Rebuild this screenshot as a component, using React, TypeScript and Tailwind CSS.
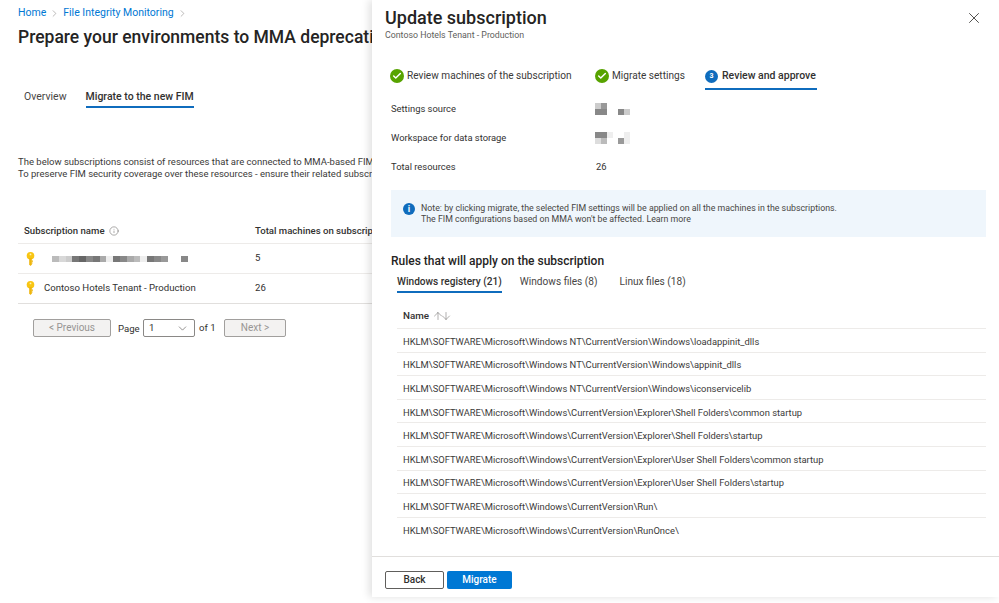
import { Check, ChevronDown, ChevronRight, Info, X, ArrowUp, ArrowDown } from "lucide-react"

const FONT = "font-['Roboto','Noto_Sans',sans-serif]"

const rules = [
  "HKLM\\SOFTWARE\\Microsoft\\Windows NT\\CurrentVersion\\Windows\\loadappinit_dlls",
  "HKLM\\SOFTWARE\\Microsoft\\Windows NT\\CurrentVersion\\Windows\\appinit_dlls",
  "HKLM\\SOFTWARE\\Microsoft\\Windows NT\\CurrentVersion\\Windows\\iconservicelib",
  "HKLM\\SOFTWARE\\Microsoft\\Windows\\CurrentVersion\\Explorer\\Shell Folders\\common startup",
  "HKLM\\SOFTWARE\\Microsoft\\Windows\\CurrentVersion\\Explorer\\Shell Folders\\startup",
  "HKLM\\SOFTWARE\\Microsoft\\Windows\\CurrentVersion\\Explorer\\User Shell Folders\\common startup",
  "HKLM\\SOFTWARE\\Microsoft\\Windows\\CurrentVersion\\Explorer\\User Shell Folders\\startup",
  "HKLM\\SOFTWARE\\Microsoft\\Windows\\CurrentVersion\\Run\\",
  "HKLM\\SOFTWARE\\Microsoft\\Windows\\CurrentVersion\\RunOnce\\",
]

function KeyIcon() {
  return (
    <svg width="9" height="14" viewBox="0 0 9 14" className="shrink-0">
      <circle cx="4.5" cy="3.8" r="3.8" fill="#f8c513" />
      <circle cx="4.5" cy="2.4" r="0.9" fill="#fff3b0" />
      <path d="M3.2 6h2.6v6.4L4.5 14l-1.3-1.6z" fill="#eeb50c" />
      <path d="M5.5 8.6h1.5v1.1H5.5zM5.5 10.4h1.1v1H5.5z" fill="#eeb50c" />
    </svg>
  )
}

function Pixels({ cells, size = 6 }: { cells: string[]; size?: number }) {
  // mosaic that hides redacted values
  return (
    <div className="flex flex-col">
      {[0, 1].map(row => (
        <div key={row} className="flex">
          {cells[row].split("").map((c, i) => (
            <div
              key={i}
              style={{ width: size, height: size, background: c === "." ? "transparent" : `#${c}${c}${c}${c}${c}${c}` }}
            />
          ))}
        </div>
      ))}
    </div>
  )
}

function DoneStep({ label }: { label: string }) {
  return (
    <div className="flex items-center gap-[3px] h-[25px] pb-[3px] text-[10.1px]">
      <span className="w-[14px] h-[14px] rounded-full bg-[#57a300] flex items-center justify-center">
        <Check className="w-[10px] h-[10px] text-white" strokeWidth={3.5} />
      </span>
      <span className="text-[#3b3a39]">{label}</span>
    </div>
  )
}

export default function App() {
  return (
    <div className={`${FONT} flex w-[999px] h-[603px] overflow-hidden bg-white text-[10.5px] text-[#323130]`}>
      <div className="w-[372px] shrink-0 overflow-hidden pl-[18px]">
        <div className="flex items-center h-[12px] mt-[7px] text-[10.5px] text-[#0078d4]">
          <span>Home</span>
          <ChevronRight className="w-[11px] h-[11px] mx-[3px] text-[#8a8886]" strokeWidth={1.25} />
          <span>File Integrity Monitoring</span>
          <ChevronRight className="w-[11px] h-[11px] ml-[3px] text-[#8a8886]" strokeWidth={1.25} />
        </div>
        <h1 className="mt-[6px] text-[17.5px] leading-[24px] font-medium text-[#252423] whitespace-nowrap">
          Prepare your environments to MMA deprecation
        </h1>
        <div className="flex mt-[39px] ml-[6px] gap-[19px] h-[20px]">
          <span className="pt-[1px] text-[#484644]">Overview</span>
          <span className="pt-[1px] h-[20px] border-b-2 border-[#0f6cbd] font-medium">Migrate to the new FIM</span>
        </div>
        <div className="mt-[48px] leading-[12px] whitespace-nowrap text-[9.5px] text-[#3b3a39]">
          <p>The below subscriptions consist of resources that are connected to MMA-based FIM and require migration.</p>
          <p>To preserve FIM security coverage over these resources - ensure their related subscriptions are migrated.</p>
        </div>
        <div className="mt-[40px] text-[9.6px]">
          <div className="flex items-center h-[24px] border-b border-[#edebe9] pl-[6px] font-medium whitespace-nowrap">
            <span className="w-[231px] shrink-0 flex items-center gap-[4px]">
              Subscription name
              <Info className="w-[10px] h-[10px] text-[#605e5c]" strokeWidth={1.25} />
            </span>
            <span>Total machines on subscription</span>
          </div>
          <div className="flex items-center h-[30px] border-b border-[#edebe9] pl-[8px]">
            <span className="w-[229px] shrink-0 flex items-center">
              <KeyIcon />
              <span className="ml-[17px]">
                <div className="flex h-[6px]">
                  {["#bbb", "#d8d8d8", "#ccc", "#777", "#666", "#888", "#777", "#aaa", "#eee", "#777", "#888", "#aaa", "#bbb", "#eee", "#777", "#888", "#999", "#fff", "#fff", "#888"].map((c, i) => (
                    <div key={i} className="w-[6.8px]" style={{ background: c }} />
                  ))}
                </div>
              </span>
            </span>
            <span>5</span>
          </div>
          <div className="flex items-center h-[30px] border-b border-[#e1dfdd] pl-[8px]">
            <span className="w-[229px] shrink-0 flex items-center gap-[9px]">
              <KeyIcon />
              Contoso Hotels Tenant - Production
            </span>
            <span>26</span>
          </div>
        </div>
        <div className="flex items-center mt-[15px] ml-[15px] text-[9.6px]">
          <button className="w-[78px] h-[18px] bg-[#f3f2f1] border border-[#a19f9d] rounded-[2px] text-[#979593] text-[10px] leading-none">&lt; Previous</button>
          <span className="ml-[7px] w-[25px] pt-[2px]">Page</span>
          <span className="w-[52px] h-[18px] border border-[#8a8886] rounded-[2px] flex items-center justify-between pl-[5px] pr-[5px]">
            1
            <ChevronDown className="w-[13px] h-[13px] text-[#605e5c]" strokeWidth={1.25} />
          </span>
          <span className="ml-[4px] w-[25px] pt-[1px]">of 1</span>
          <button className="w-[62px] h-[18px] bg-[#f3f2f1] border border-[#a19f9d] rounded-[2px] text-[#979593] text-[10px] leading-none">Next &gt;</button>
        </div>
      </div>

      <div className="relative flex-1 h-[597px] flex flex-col pl-[13px] pr-[13px] shadow-[-3px_0_8px_rgba(0,0,0,0.12)]">
        <X className="absolute right-[16px] top-[9px] w-[18px] h-[18px] text-[#484644]" strokeWidth={1.25} />
        <h2 className="mt-[6px] text-[18px] leading-[24px] font-medium text-[#252423]">Update subscription</h2>
        <p className="text-[8.8px] leading-[11px] text-[#605e5c]">Contoso Hotels Tenant - Production</p>

        <div className="flex items-start mt-[24px] ml-[5px] h-[25px] whitespace-nowrap">
          <div className="w-[205px]"><DoneStep label="Review machines of the subscription" /></div>
          <div className="w-[110px]"><DoneStep label="Migrate settings" /></div>
          <div className="flex items-center gap-[4px] h-[25px] pb-[1px] border-b-2 border-[#0f6cbd] pr-[1px]">
            <span className="w-[13px] h-[13px] rounded-full bg-[#0f6cbd] text-white text-[7px] font-bold flex items-center justify-center">3</span>
            <span className="font-medium">Review and approve</span>
          </div>
        </div>

        <div className="ml-[6px] mt-[5px] whitespace-nowrap text-[9.4px]">
          <div className="flex items-center h-[29px]">
            <span className="w-[205px]">Settings source</span>
            <div className="flex items-end gap-[5px] -ml-[1px] -mt-[1px]">
              <Pixels cells={["c9.", "88."]} />
              <Pixels cells={[".f", "8c"]} />
            </div>
          </div>
          <div className="flex items-center h-[29px]">
            <span className="w-[205px]">Workspace for data storage</span>
            <div className="flex items-end gap-[5px] -ml-[1px] -mt-[1px]">
              <Pixels cells={["88e", "dbf"]} />
              <Pixels cells={[".e", "9e"]} />
            </div>
          </div>
          <div className="flex items-center h-[29px]">
            <span className="w-[205px]">Total resources</span>
            <span>26</span>
          </div>
        </div>

        <div className="ml-[6px] mt-[8px] h-[47px] bg-[#eff6fc] flex items-start pt-[13px] pl-[12px] text-[8.8px] leading-[11px] text-[#484644]">
          <span className="w-[12px] h-[12px] rounded-full bg-[#0f6cbd] text-white text-[9px] font-bold flex items-center justify-center shrink-0 mr-[6px]">i</span>
          <div className="whitespace-nowrap">
            <p>Note: by clicking migrate, the selected FIM settings will be applied on all the machines in the subscriptions.</p>
            <p>The FIM configurations based on MMA won't be affected. Learn more</p>
          </div>
        </div>

        <h3 className="ml-[6px] mt-[16px] text-[12px] leading-[16px] font-medium text-[#252423]">Rules that will apply on the subscription</h3>
        <div className="flex ml-[12px] mt-[5px] gap-[18px] h-[19px] whitespace-nowrap text-[10.15px]">
          <span className="h-[19px] border-b-2 border-[#0f6cbd] font-medium">Windows registery (21)</span>
          <span className="text-[#484644]">Windows files (8)</span>
          <span className="ml-[4px] text-[#484644]">Linux files (18)</span>
        </div>

        <div className="ml-[12px] mt-[11px] text-[9.4px]">
          <div className="flex items-center h-[25px] pl-[6px] border-b border-[#edebe9] font-medium text-[9.8px]">
            Name
            <span className="flex ml-[3px] text-[#605e5c]">
              <ArrowUp className="w-[12px] h-[12px] -mr-[4px]" strokeWidth={1} />
              <ArrowDown className="w-[12px] h-[12px]" strokeWidth={1} />
            </span>
          </div>
          {rules.map((r, i) => (
            <div
              key={r}
              className={`flex items-center h-[23.6px] pl-[6px] pt-[3px] whitespace-nowrap text-[#3b3a39] ${i < rules.length - 1 ? "border-b border-[#edebe9]" : ""}`}
            >
              {r}
            </div>
          ))}
        </div>

        <div className="mt-auto -mx-[13px] border-t border-[#e1dfdd] h-[41px] pl-[13px] pt-[14px] flex gap-[3px]">
          <button className="w-[59px] h-[18px] border border-[#605e5c] rounded-[2px] bg-white font-medium text-[10px] leading-none">Back</button>
          <button className="w-[65px] h-[18px] rounded-[2px] bg-[#0078d4] text-white font-medium text-[10px] leading-none">Migrate</button>
        </div>
      </div>
    </div>
  )
}
